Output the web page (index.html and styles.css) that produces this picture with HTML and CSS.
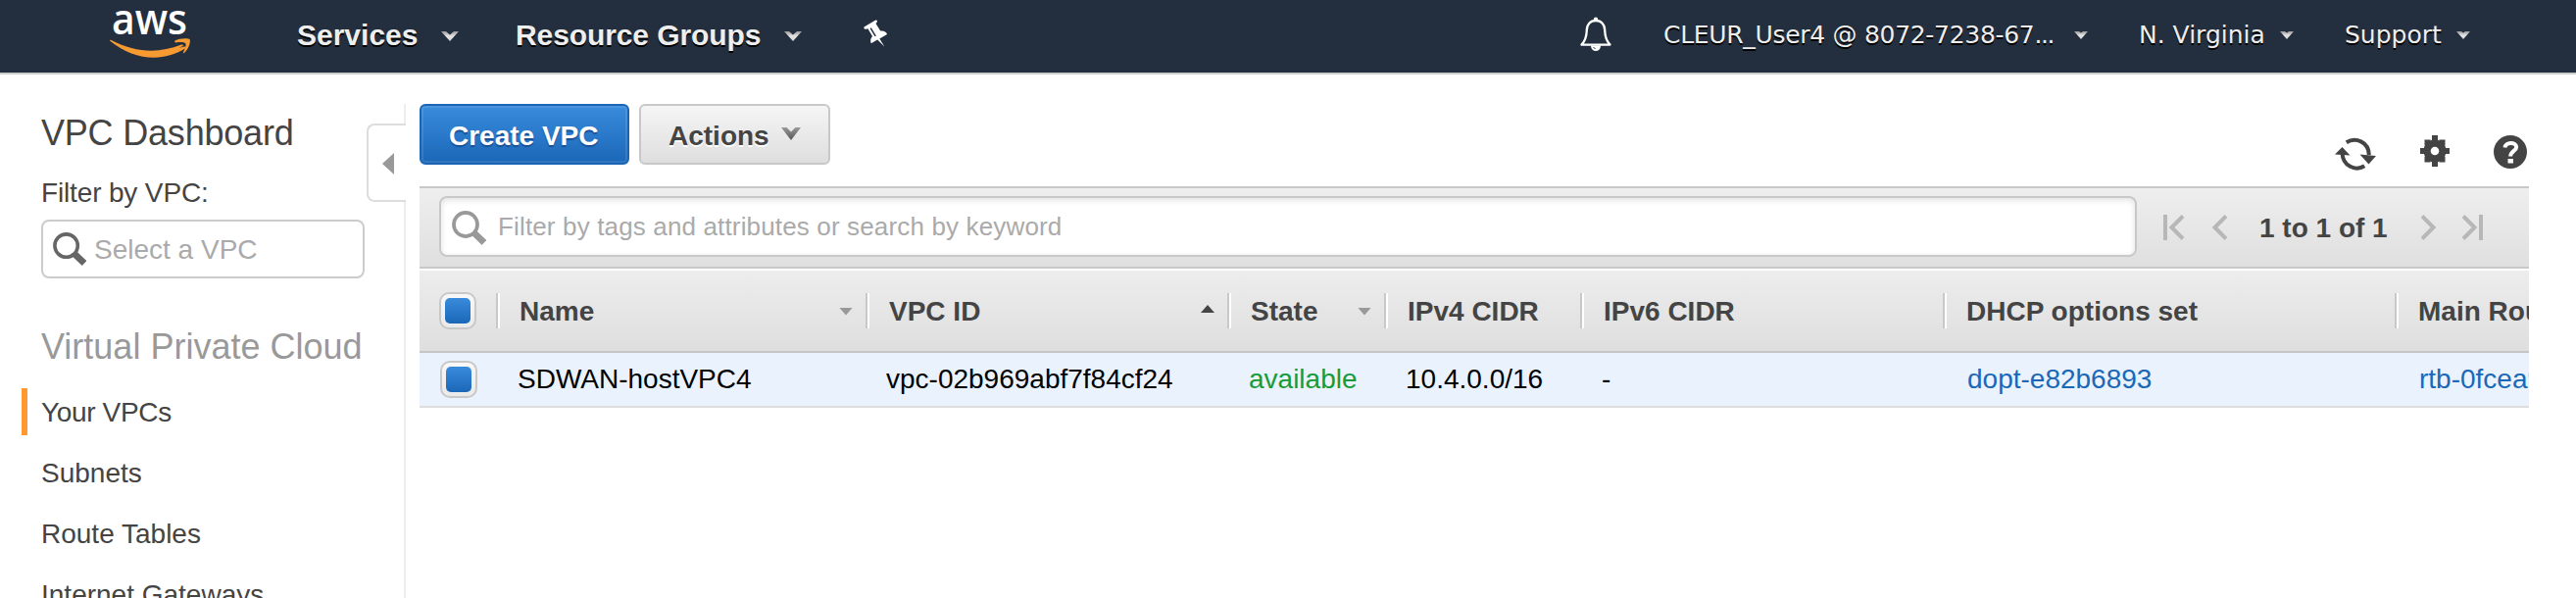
FILE: index.html
```html
<!DOCTYPE html>
<html lang="en">
<head>
<meta charset="utf-8">
<title>VPC Management Console</title>
<link rel="stylesheet" href="styles.css">
</head>
<body>
<svg width="0" height="0" class="defs">
  <defs>
    <linearGradient id="silver" x1="0" y1="0" x2="0" y2="1"><stop offset="0" stop-color="#999"/><stop offset=".5" stop-color="#e4e4e4"/><stop offset="1" stop-color="#d4d4d4"/></linearGradient>
    <linearGradient id="steel" x1="0" y1="0" x2="0" y2="1"><stop offset="0" stop-color="#999"/><stop offset="1" stop-color="#555"/></linearGradient>
    <symbol id="chev" viewBox="0 0 18 10"><path d="M0 0h5l4 3.4L13 0h5L9 10z"/></symbol>
    <symbol id="caret" viewBox="0 0 14 8"><path d="M0 0h5l2 1.500L9 0h5L7 8z"/></symbol>
    <symbol id="lens" viewBox="0 0 34 34"><circle cx="13.600" cy="13.600" r="11.700" fill="none" stroke="currentColor" stroke-width="3.600"/><path d="M21.500 21.500l10.500 10" fill="none" stroke="currentColor" stroke-width="6.600"/></symbol>
  </defs>
</svg>

<header class="topbar">
  <svg class="logo" viewBox="0 0 84 54" width="84" height="54">
    <text x="2" y="29.500" textLength="77" lengthAdjust="spacingAndGlyphs">aws</text>
    <path d="M.6 36.800C24 51 49 51.500 75.500 42.600C77 42 78.200 43.500 76.700 44.600C54 59 24 56.500 0 36.500C-.2 35.800.5 35.500 1.600 36C26 48.500 49 50 73 40.600C74.500 40 75.800 41 74.300 42C52 55 20 53 .6 36.800z" fill="#f79a32"/>
    <path d="M66.500 36.600C71 33.800 80 33.800 81.700 35.200C82.800 38 80 45.500 76 49C75.300 49.500 74.700 49 75 48.300C77 44 78.200 40.500 77.200 39.200C76 37.700 71.500 37.800 67.300 38.400C66.200 38.500 65.800 37.200 66.500 36.600z" fill="#f79a32"/>
  </svg>
  <a class="nav nav-services">Services</a>
  <svg class="chev" width="18" height="10" fill="url(#silver)"><use href="#chev"/></svg>
  <a class="nav nav-groups">Resource Groups</a>
  <svg class="chev" width="18" height="10" fill="url(#silver)"><use href="#chev"/></svg>
  <svg class="pin" width="25" height="28" viewBox="0 0 25 28">
    <path fill="#fff" d="M.5 7.500L12.300.6C13.700 0 14.600 1.800 13.300 3L12.500 4L17.200 11.500C20.500 11 23.300 12.300 24 15L16.300 19.400L21.300 27.500L14.200 20.500L7.800 24.300C6.600 22 7 19.300 9 17L4.400 9.200L2.300 9.700C.7 10 0 8.700.5 7.500z"/>
    <path d="M7.200 8.700l5 8.200" stroke="#232f3e" stroke-width="1.500"/>
  </svg>
  <svg class="bell" width="32" height="36" viewBox="0 0 32 36">
    <path d="M1.500 28.600H30.500C27 25 25.400 20 25.200 14C25.200 8 21.500 4 16 4S6.800 8 6.800 14C6.600 20 5 25 1.500 28.600z" fill="none" stroke="#fff" stroke-width="2.300" stroke-linejoin="round"/>
    <circle cx="16" cy="2.800" r="2.200" fill="#fff"/>
    <path d="M11 29.500a5 5.500 0 0 0 10 0z" fill="#fff"/><path d="M13.500 31l2 2" stroke="#232f3e" stroke-width="1"/>
  </svg>
  <a class="user user-account">CLEUR_User4 @ 8072-7238-67<span class="dots">...</span></a>
  <svg class="caret" width="14" height="8" fill="url(#silver)"><use href="#caret"/></svg>
  <a class="user user-region">N. Virginia</a>
  <svg class="caret" width="14" height="8" fill="url(#silver)"><use href="#caret"/></svg>
  <a class="user user-support">Support</a>
  <svg class="caret" width="14" height="8" fill="url(#silver)"><use href="#caret"/></svg>
</header>

<div class="layout">
  <aside class="sidebar">
    <div class="side-content">
      <h1 class="side-title">VPC Dashboard</h1>
      <div class="side-label">Filter by VPC:</div>
      <div class="side-select"><svg width="34" height="34"><use href="#lens"/></svg><span>Select a VPC</span></div>
      <h2 class="side-section">Virtual Private Cloud</h2>
      <nav class="side-nav">
        <a class="side-link side-active">Your VPCs</a>
        <a class="side-link">Subnets</a>
        <a class="side-link">Route Tables</a>
        <a class="side-link">Internet Gateways</a>
      </nav>
    </div>
    <div class="rail">
      <div class="rail-line rail-top"></div>
      <div class="collapse"><svg width="12" height="22" viewBox="0 0 12 22"><path d="M0 11L12 0v22z" fill="#999"/></svg></div>
      <div class="rail-line rail-rest"></div>
    </div>
  </aside>

  <main class="main">
    <div class="actions">
      <button class="btn btn-primary">Create VPC</button>
      <button class="btn btn-default">Actions<svg width="20" height="13" viewBox="0 0 18 10" preserveAspectRatio="none" fill="url(#steel)"><use href="#chev" width="18" height="10"/></svg></button>
      <div class="tools">
        <svg width="42" height="34" viewBox="0 0 42 34">
          <g fill="none" stroke="#444" stroke-width="4"><path d="M11.800 5.200C21-.5 34.500 4.500 34.800 18"/><path d="M30.200 29.300C21 35 8 29.500 7.500 16"/></g>
          <path d="M25.500 17.500L42 19L34.500 27.500zM0 17.500L7.500 10L15.500 18.500z" fill="#444"/>
        </svg>
        <svg width="30" height="32" viewBox="0 0 30 32">
          <g fill="#444"><circle cx="15" cy="16" r="11.500"/><path d="M12 0h6v32h-6zM0 13h30v6H0z"/><path d="M4.500 4.500h6v6h-6zM19.500 4.500h6v6h-6zM4.500 21.500h6v6h-6zM19.500 21.500h6v6h-6z"/></g>
          <circle cx="15" cy="16" r="4.300" fill="#fff"/>
        </svg>
        <svg width="34" height="34" viewBox="0 0 34 34">
          <circle cx="17" cy="17" r="17" fill="#444"/>
          <path d="M11.500 12.500C12 6.500 22.800 6.500 23.200 12C23.200 16 17.200 16 17.200 21.500" fill="none" stroke="#fff" stroke-width="4"/><path d="M14.500 24h5.500v4.500h-5.500z" fill="#fff"/>
        </svg>
      </div>
    </div>

    <div class="filterbar">
      <div class="search"><svg width="35" height="35"><use href="#lens"/></svg><span>Filter by tags and attributes or search by keyword</span></div>
      <div class="pager">
        <svg width="65" height="26" viewBox="0 0 65 26" fill="none" stroke="#b7b7b7" stroke-width="4"><path d="M2 0v26M20 1.500L8.500 13L20 24.500M64 1.500L52.500 13L64 24.500"/></svg>
        <span class="pager-text">1 to 1 of 1</span>
        <svg width="63" height="26" viewBox="0 0 63 26" fill="none" stroke="#b7b7b7" stroke-width="4"><path d="M1 1.500L12.500 13L1 24.500M43 1.500L54.500 13L43 24.500M61 0v26"/></svg>
      </div>
    </div>

    <div class="grid grid-head">
      <div class="check-cell"><span class="check"></span></div>
      <div class="th">Name<i class="sort sort-down"></i></div>
      <div class="th">VPC ID<i class="sort sort-up"></i></div>
      <div class="th">State<i class="sort sort-down"></i></div>
      <div class="th">IPv4 CIDR</div>
      <div class="th">IPv6 CIDR</div>
      <div class="th">DHCP options set</div>
      <div class="th">Main Route table</div>
    </div>
    <div class="grid grid-row">
      <div class="check-cell"><span class="check check-row"></span></div>
      <div class="td">SDWAN-hostVPC4</div>
      <div class="td td-id">vpc-02b969abf7f84cf24</div>
      <div class="td td-ok">available</div>
      <div class="td">10.4.0.0/16</div>
      <div class="td">-</div>
      <div class="td td-link">dopt-e82b6893</div>
      <div class="td td-link">rtb-0fcea9</div>
    </div>
  </main>
</div>
</body>
</html>
```
FILE: styles.css
```css
* { box-sizing: border-box; }
body {
  margin: 0;
  height: 610px;
  overflow: hidden;
  background: #fff;
  color: #444;
  font: 28px/32px "Liberation Sans", Arial, Helvetica, sans-serif;
  white-space: nowrap;
}
svg { display: block; flex: none; }
.defs { position: absolute; }

.topbar {
  display: flex;
  align-items: flex-start;
  height: 76px;
  background: #232f3e;
  border-bottom: 2px solid #ccc;
}
.logo { margin: 5px 0 0 112px; overflow: visible; }
.logo text { font: 600 44px "Open Sans", "Noto Sans", sans-serif; fill: #fff; }
.nav, .user { line-height: 72px; color: #eee; text-shadow: 0 2px 0 #000; }
.nav { font-size: 30px; font-weight: bold; }
.nav-services { width: 147px; margin-left: 107px; }
.nav-groups { width: 274px; margin-left: 58px; letter-spacing: -.1px; }
.chev { margin-top: 32px; }
.pin { margin: 20px 0 0 63px; }
.bell { margin: 17px 0 0 706px; }
.user { font: 25px/72px "DejaVu Sans", Verdana, sans-serif; }
.user-account { width: 419px; margin-left: 53px; letter-spacing: -.3px; }
.dots { letter-spacing: -1.4px; }
.user-region { width: 144px; margin-left: 52px; }
.user-support { width: 114px; margin-left: 52px; }
.caret { margin-top: 32px; }

.layout { display: flex; height: 534px; padding-top: 30px; }
.sidebar { display: flex; flex: none; width: 414px; }
.side-content { width: 374px; padding: 10px 2px 0 42px; }
.side-title, .side-section { margin: 0; font-size: 36px; line-height: 40px; font-weight: normal; }
.side-title { letter-spacing: -.2px; }
.side-label { margin-top: 25px; letter-spacing: -.15px; }
.side-select {
  display: flex;
  align-items: center;
  height: 60px;
  margin-top: 11px;
  padding: 0 10px;
  border: 2px solid #ccc;
  border-radius: 8px;
  color: #aaa;
}
.side-select span { padding-top: 1px; }
.side-select svg { margin-right: 8px; color: #666; }
.side-section { margin-top: 50px; color: #999; }
.side-nav { display: flex; flex-direction: column; gap: 14px; margin: 22px 0 0 -20px; }
.side-link { height: 48px; padding-left: 14px; border-left: 6px solid transparent; line-height: 49px; }
.side-active { border-color: #ff9930; letter-spacing: -.35px; }
.rail { display: flex; flex-direction: column; align-items: flex-end; width: 40px; }
.rail-line { width: 2px; background: #eee; }
.rail-top { height: 20px; }
.rail-rest { flex: 1; }
.collapse {
  display: flex;
  align-items: center;
  width: 40px;
  height: 80px;
  padding: 2px 0 0 14px;
  border: 2px solid #ddd;
  border-right: 0;
  border-radius: 8px 0 0 8px;
}

.main { flex: none; width: 2152px; margin-left: 14px; }
.actions { display: flex; height: 84px; }
.btn {
  display: flex;
  align-items: center;
  height: 62px;
  border-radius: 6px;
  padding: 3px 28px 0;
  font: bold 28px/32px "Liberation Sans", Arial, sans-serif;
}
.btn-primary {
  width: 214px;
  color: #fff;
  border: 2px solid #1c65b5;
  background: linear-gradient(#398bdc, #1b67b8);
  box-shadow: inset 0 0 0 2px rgba(255,255,255,.1);
  text-shadow: 0 2px 1px #1a4f94;
}
.btn-default {
  width: 195px;
  margin-left: 10px;
  color: #444;
  border: 2px solid #c8c8c8;
  background: linear-gradient(#f5f5f5, #dedede);
  text-shadow: 0 2px 0 #fff;
}
.btn-default svg { margin: -5px 0 0 12px; }
.tools { display: flex; align-items: flex-start; gap: 45px; margin: 32px 2px 0 auto; }
.tools svg:first-child { margin-top: 2px; }

.filterbar {
  display: flex;
  align-items: flex-start;
  height: 84px;
  padding: 8px 47px 0 20px;
  border-top: 2px solid #c8c8c8;
  border-bottom: 2px solid #c8c8c8;
  background: linear-gradient(#eee, #dfdfdf);
}
.search {
  display: flex;
  align-items: center;
  width: 1732px;
  height: 62px;
  padding-left: 11px;
  border: 2px solid #c8c8c8;
  border-radius: 8px;
  background: #fff;
  box-shadow: inset 0 2px 6px rgba(0,0,0,.12);
  color: #aaa;
  font-size: 26px;
  letter-spacing: .15px;
}
.search svg { margin: 3px 12px 0 0; color: #999; }
.pager { display: flex; align-items: center; flex: 1; height: 64px; padding-left: 27px; }
.pager-text { width: 165px; margin-left: 33px; padding-top: 1px; font-weight: bold; }

.grid { display: grid; grid-template-columns: 78px 377px 369px 160px 200px 370px 461px 137px; align-items: center; }
.grid-head {
  height: 84px;
  margin-top: 2px;
  border-bottom: 2px solid #c5c5c5;
  background: linear-gradient(#ededed, #dedede);
  font-weight: bold;
}
.grid-row { height: 56px; border-bottom: 2px solid #ddd; background: #eaf2fe; color: #000; }
.check-cell { padding-left: 20px; }
.check {
  display: block;
  width: 38px;
  height: 38px;
  padding: 4px;
  border: 2px solid #c8c8c8;
  border-radius: 10px;
  background: linear-gradient(#f8f8f8, #eaeaea);
}
.check::before {
  content: "";
  display: block;
  width: 26px;
  height: 26px;
  border-radius: 5px;
  background: linear-gradient(#398bdc, #1b67b8);
}
.check-row { margin-left: 1px; }
.th {
  display: flex;
  align-items: center;
  height: 36px;
  padding: 1px 0 0 22px;
  border-left: 2px solid #c8c8c8;
  box-shadow: inset 2px 0 0 #fff;
  overflow: hidden;
}
.sort { width: 14px; height: 8px; margin: 0 13px 0 auto; }
.sort-down { background: #999; clip-path: polygon(0 0, 100% 0, 50% 100%); }
.sort-up { margin-top: -5px; background: #444; clip-path: polygon(50% 0, 100% 100%, 0 100%); }
.td { padding: 0 0 1px 22px; overflow: hidden; }
.td-id { padding-left: 21px; }
.td-ok { color: #169c3a; }
.td-link { padding-left: 25px; color: #1b68b7; }
```
